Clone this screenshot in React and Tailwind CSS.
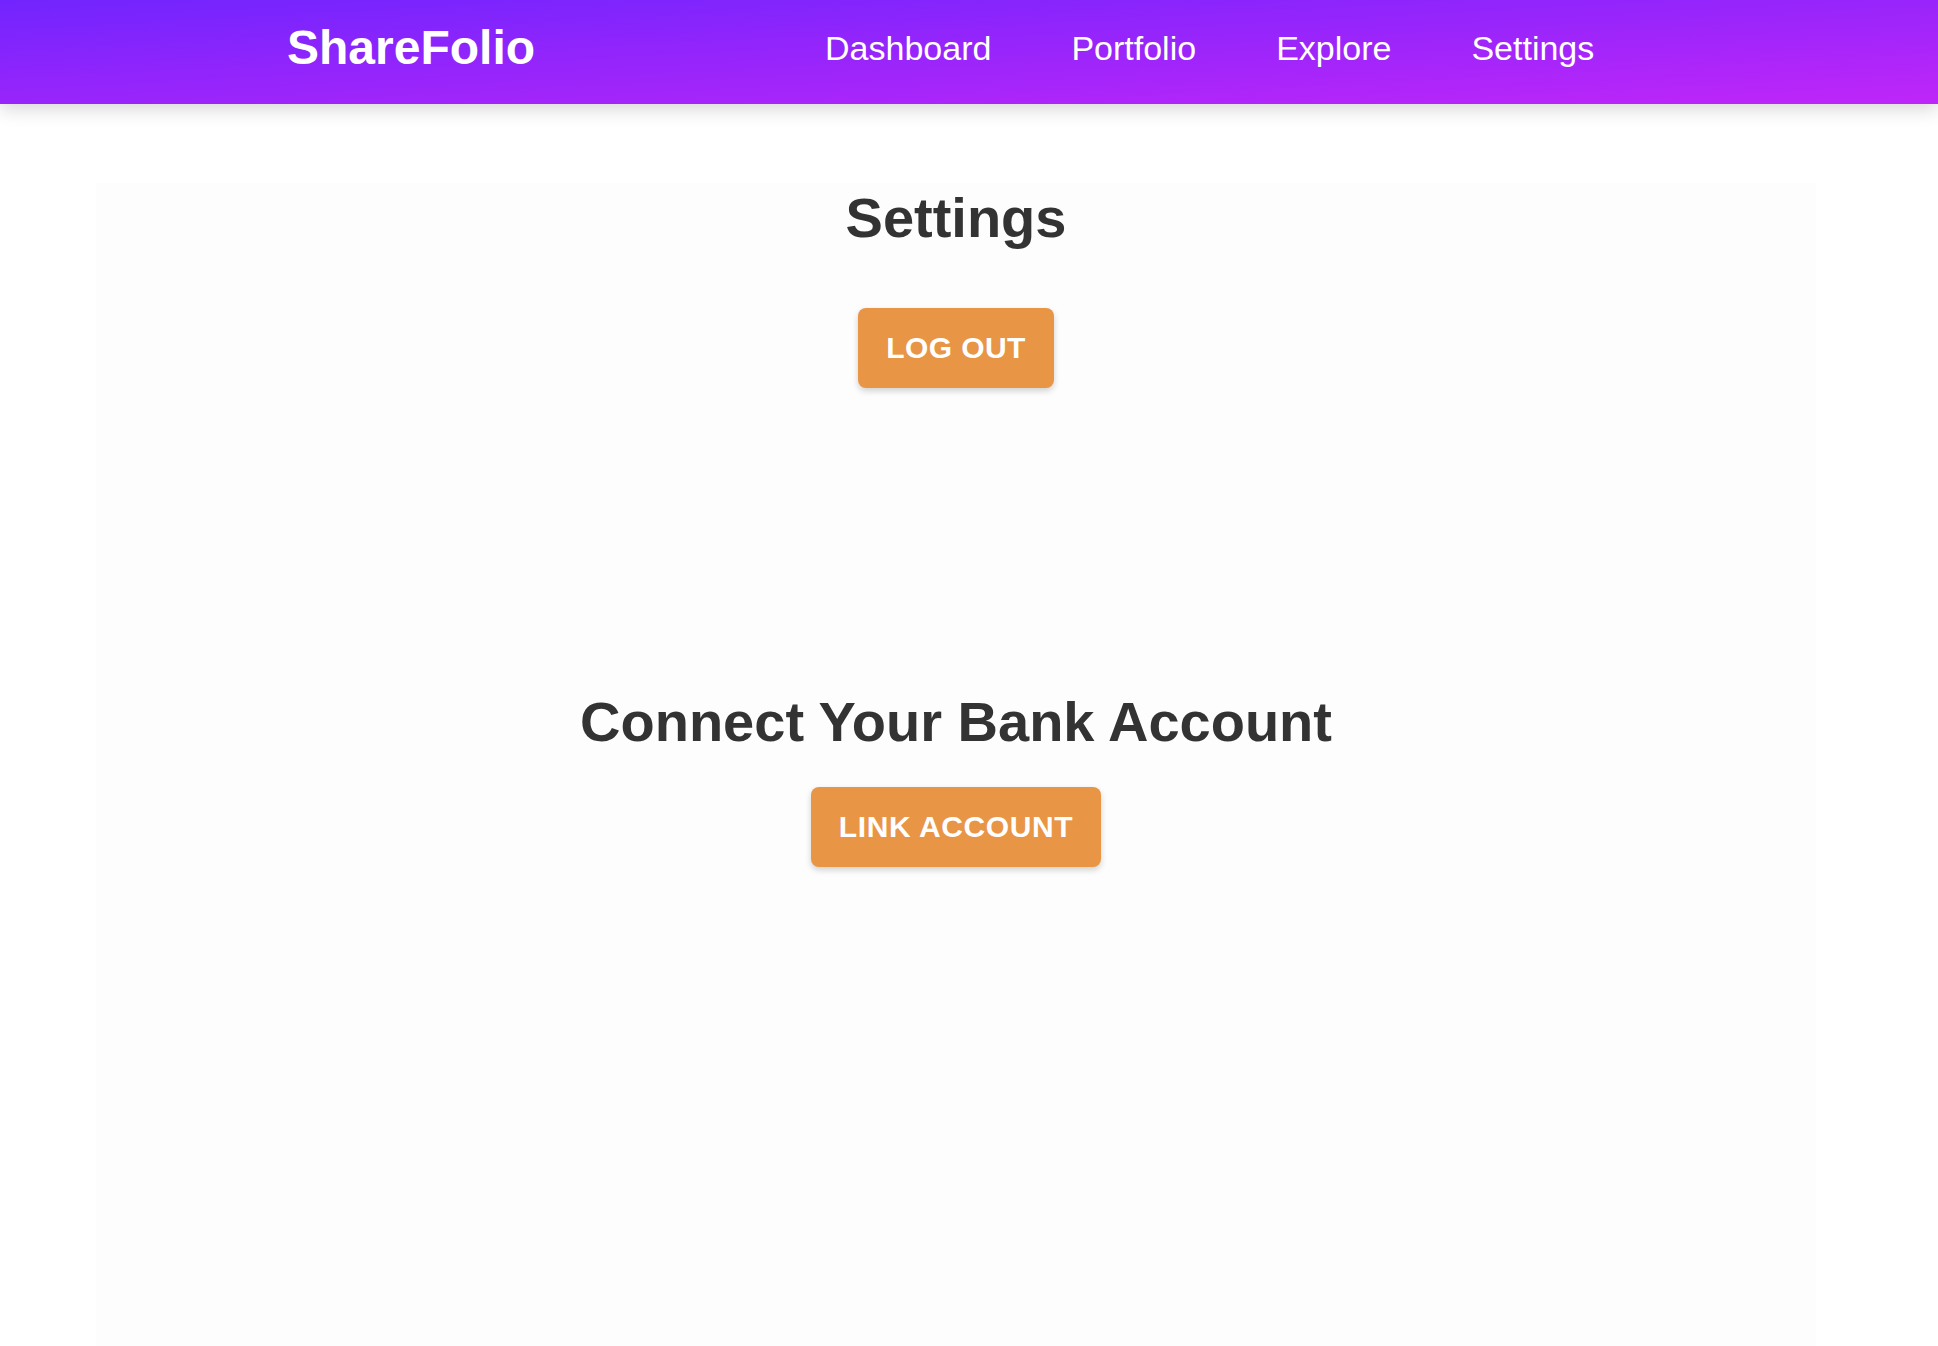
export default function App() {
  const links = ['Dashboard', 'Portfolio', 'Explore', 'Settings'];

  return (
    <div className="min-h-screen bg-white font-['Liberation_Sans',Arial,sans-serif]">
      {/* top bar */}
      <header className="relative z-10 h-[104px] flex items-center pb-[9px] pl-[287px] bg-[linear-gradient(to_right_bottom,#7224fe,#bf26f8)] shadow-[0_5px_18px_rgba(0,0,0,0.16)]">
        <span className="text-[48px] font-bold text-white leading-none">ShareFolio</span>
        <nav className="ml-[290px] flex items-center gap-[80px]">
          {links.map((l) => (
            <a key={l} href="#" className="text-[34px] text-white leading-none">
              {l}
            </a>
          ))}
        </nav>
      </header>

      {/* content panel */}
      <main className="mt-[79px] ml-[96px] w-[1720px] min-h-[1163px] bg-[#fdfdfd] flex flex-col items-center pt-[3px]">
        <h1 className="text-[56px] leading-[64px] font-bold text-[#333333]">Settings</h1>
        <button className="mt-[58px] px-[28px] py-[20px] leading-[40px] text-[30px] font-bold tracking-[0.4px] text-white bg-[#e89545] rounded-[8px] shadow-[0_3px_6px_rgba(0,0,0,0.18)]">
          LOG OUT
        </button>

        <h2 className="mt-[302px] text-[56px] leading-[64px] font-bold text-[#333333]">
          Connect Your Bank Account
        </h2>
        <button className="mt-[33px] px-[28px] py-[20px] leading-[40px] text-[30px] font-bold tracking-[0.6px] text-white bg-[#e89545] rounded-[8px] shadow-[0_3px_6px_rgba(0,0,0,0.18)]">
          LINK ACCOUNT
        </button>
      </main>
    </div>
  );
}
